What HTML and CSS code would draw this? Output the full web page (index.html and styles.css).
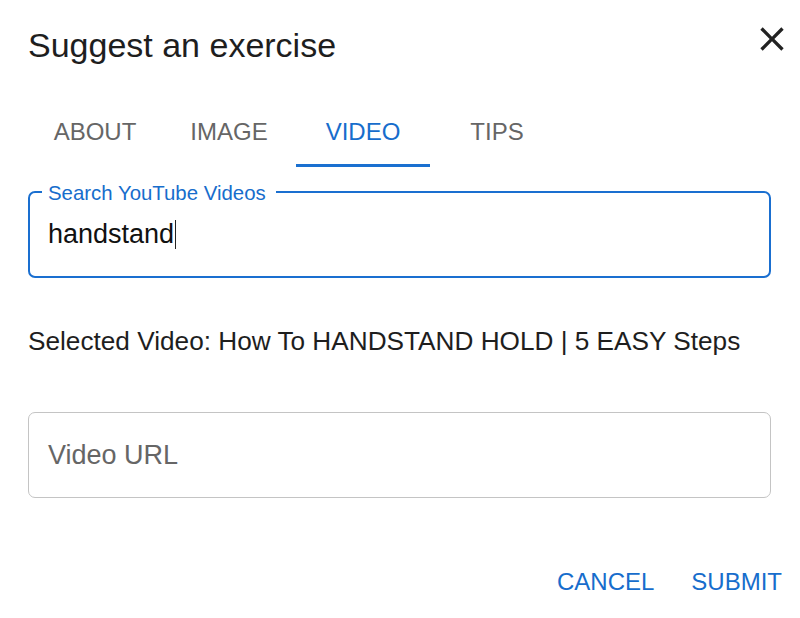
FILE: index.html
```html
<!DOCTYPE html>
<html>
<head>
<meta charset="utf-8">
<link rel="stylesheet" href="styles.css">
</head>
<body>
<div class="dialog">
  <div class="header">
    <h1 class="title">Suggest an exercise</h1>
    <button class="close" aria-label="close">
      <svg viewBox="0 0 24 24" width="40" height="40"><path d="M19 6.41 17.59 5 12 10.59 6.41 5 5 6.41 10.59 12 5 17.59 6.41 19 12 13.41 17.59 19 19 17.59 13.41 12z" fill="#222"/></svg>
    </button>
  </div>
  <div class="tabs">
    <div class="tab">ABOUT</div>
    <div class="tab">IMAGE</div>
    <div class="tab active">VIDEO</div>
    <div class="tab">TIPS</div>
  </div>
  <div class="field focused">
    <span class="label">Search YouTube Videos</span>
    <div class="value">handstand<span class="caret"></span></div>
  </div>
  <p class="selected">Selected Video: How To HANDSTAND HOLD | 5 EASY Steps</p>
  <div class="field plain">
    <div class="placeholder">Video URL</div>
  </div>
  <div class="actions">
    <button class="btn">CANCEL</button>
    <button class="btn">SUBMIT</button>
  </div>
</div>
</body>
</html>
```
FILE: styles.css
```css
* { box-sizing: border-box; }
html, body { margin: 0; padding: 0; background: #fff; }
body { font-family: "Liberation Sans", Arial, Helvetica, sans-serif; color: #212121; }
.dialog { width: 800px; height: 618px; padding: 0 29px 0 28px; overflow: hidden; }
.header { display: flex; justify-content: space-between; align-items: flex-start; height: 96px; }
.title { margin: 25px 0 0; font-size: 34px; line-height: 40px; font-weight: 400; color: #1e1e1e; }
.close { margin: 19px -21px 0 0; padding: 0; border: 0; background: none; width: 40px; height: 40px; display: block; }
.close svg { display: block; }
.tabs { display: flex; height: 71px; }
.tab { width: 134px; display: flex; align-items: center; justify-content: center; font-size: 24px; line-height: 24px; color: #666; }
.tab.active { color: #176dcc; box-shadow: inset 0 -3px 0 #1a70d0; }
.field { position: relative; height: 87px; border-radius: 7px; display: flex; align-items: center; }
.field.focused { margin-top: 24px; border: 2px solid #1a6fd0; padding: 0 18px; }
.field.plain { margin-top: 56px; border: 1px solid #c4c4c4; padding: 0 19px; height: 86px; }
.label { position: absolute; left: 12px; top: -10px; padding: 0 10px 0 6px; background: #fff; font-size: 20.4px; line-height: 20px; color: #176dcc; }
.value { font-size: 27px; line-height: 27px; color: #111; display: flex; align-items: center; }
.caret { display: inline-block; width: 1px; height: 29px; background: #222; margin-left: 1px; }
.placeholder { font-size: 27px; line-height: 27px; color: #666; }
.selected { margin: 48px 0 0; font-size: 26.2px; line-height: 30px; color: #1e1e1e; }
.actions { display: flex; justify-content: flex-end; gap: 37px; margin-top: 72px; margin-right: -11px; }
.btn { padding: 0; border: 0; background: none; font-family: inherit; font-size: 24px; line-height: 24px; color: #176dcc; }
```
